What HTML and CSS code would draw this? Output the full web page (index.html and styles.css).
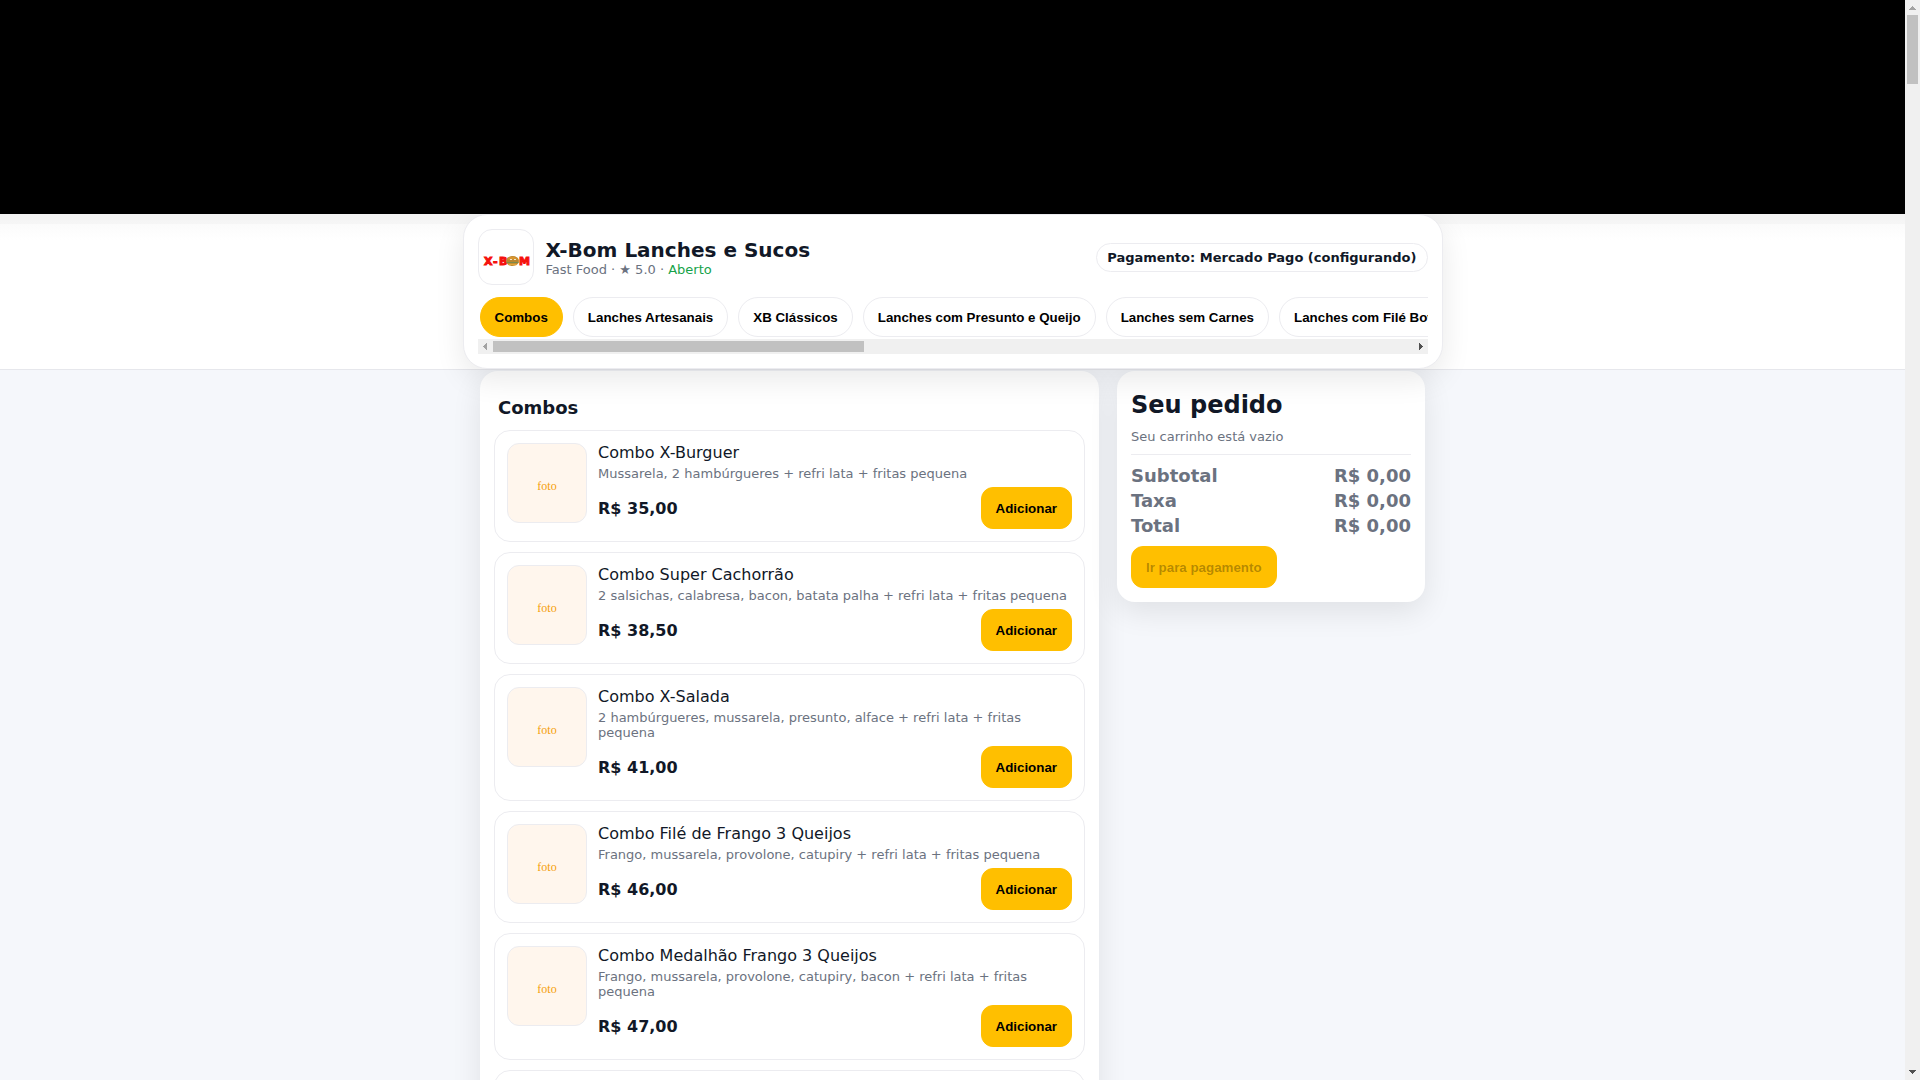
FILE: index.html
```html
<!DOCTYPE html>
<html lang="pt-BR">
<head>
    <meta charset="UTF-8">
    <meta name="viewport" content="width=device-width, initial-scale=1.0">
    <title>X-Bom Lanches e Sucos</title>
    <link rel="stylesheet" href="styles.css">
</head>
<body>
    <div class="page">
        <div class="hero"></div>

        <header class="topbar">
            <div class="store-card">
                <div class="store-row">
                    <div class="logo">
                        <svg viewBox="0 0 54 54" role="img" aria-label="X-Bom">
                            <text class="logo-text" y="35"><tspan x="5">X</tspan><tspan x="14">-</tspan><tspan x="20">B</tspan><tspan x="40">M</tspan></text>
                            <ellipse cx="33.5" cy="31" rx="6.5" ry="5" fill="#b8862f"/>
                            <path d="M28 29.500q5.500-6 11 0z" fill="#d9952f"/>
                            <path d="M27.500 32.500h12" stroke="#7d8a4c" stroke-width="1"/>
                            <path d="M31 29.500h2M35 29.500h2" stroke="#f4e6c8" stroke-width="1"/>
                            <path d="M29.500 34.500h8" stroke="#e3a63a" stroke-width="1.500"/>
                        </svg>
                    </div>
                    <div class="store-info">
                        <h1>X-Bom Lanches e Sucos</h1>
                        <div class="store-meta">Fast Food · ★ 5.0 · <span class="open">Aberto</span></div>
                    </div>
                    <span class="pill">Pagamento: Mercado Pago (configurando)</span>
                </div>
                <nav class="tabs">
                    <button class="tab active" type="button">Combos</button>
                    <button class="tab" type="button">Lanches Artesanais</button>
                    <button class="tab" type="button">XB Clássicos</button>
                    <button class="tab" type="button">Lanches com Presunto e Queijo</button>
                    <button class="tab" type="button">Lanches sem Carnes</button>
                    <button class="tab" type="button">Lanches com Filé Bovino</button>
                </nav>
                <div class="scrollbar scrollbar-x" aria-hidden="true">
                    <svg class="arrow off" viewBox="0 0 15 15"><path d="M9 4v7L5 7.500z"/></svg>
                    <div class="track"><div class="thumb-bar"></div></div>
                    <svg class="arrow" viewBox="0 0 15 15"><path d="M6 4v7l4-3.500z"/></svg>
                </div>
            </div>
        </header>

        <main class="layout">
            <section class="menu panel">
                <h2 class="section-title">Combos</h2>
                <div class="items">
                    <article class="item">
                        <div class="thumb">foto</div>
                        <div class="item-body">
                            <h3>Combo X-Burguer</h3>
                            <p>Mussarela, 2 hambúrgueres + refri lata + fritas pequena</p>
                            <div class="item-foot"><strong>R$ 35,00</strong><button class="btn" type="button">Adicionar</button></div>
                        </div>
                    </article>
                    <article class="item">
                        <div class="thumb">foto</div>
                        <div class="item-body">
                            <h3>Combo Super Cachorrão</h3>
                            <p>2 salsichas, calabresa, bacon, batata palha + refri lata + fritas pequena</p>
                            <div class="item-foot"><strong>R$ 38,50</strong><button class="btn" type="button">Adicionar</button></div>
                        </div>
                    </article>
                    <article class="item">
                        <div class="thumb">foto</div>
                        <div class="item-body">
                            <h3>Combo X-Salada</h3>
                            <p>2 hambúrgueres, mussarela, presunto, alface + refri lata + fritas pequena</p>
                            <div class="item-foot"><strong>R$ 41,00</strong><button class="btn" type="button">Adicionar</button></div>
                        </div>
                    </article>
                    <article class="item">
                        <div class="thumb">foto</div>
                        <div class="item-body">
                            <h3>Combo Filé de Frango 3 Queijos</h3>
                            <p>Frango, mussarela, provolone, catupiry + refri lata + fritas pequena</p>
                            <div class="item-foot"><strong>R$ 46,00</strong><button class="btn" type="button">Adicionar</button></div>
                        </div>
                    </article>
                    <article class="item">
                        <div class="thumb">foto</div>
                        <div class="item-body">
                            <h3>Combo Medalhão Frango 3 Queijos</h3>
                            <p>Frango, mussarela, provolone, catupiry, bacon + refri lata + fritas pequena</p>
                            <div class="item-foot"><strong>R$ 47,00</strong><button class="btn" type="button">Adicionar</button></div>
                        </div>
                    </article>
                    <article class="item">
                        <div class="thumb"></div>
                    </article>
                </div>
            </section>

            <aside class="cart panel">
                <h2>Seu pedido</h2>
                <p class="empty">Seu carrinho está vazio</p>
                <dl class="totals">
                    <div><dt>Subtotal</dt><dd>R$ 0,00</dd></div>
                    <div><dt>Taxa</dt><dd>R$ 0,00</dd></div>
                    <div><dt>Total</dt><dd>R$ 0,00</dd></div>
                </dl>
                <button class="btn" type="button" disabled>Ir para pagamento</button>
            </aside>
        </main>
    </div>

    <div class="scrollbar scrollbar-y" aria-hidden="true">
        <svg class="arrow off" viewBox="0 0 15 15"><path d="M4 10h7L7.500 6z"/></svg>
        <div class="track"><div class="thumb-bar"></div></div>
        <svg class="arrow" viewBox="0 0 15 15"><path d="M4 5h7L7.500 9z"/></svg>
    </div>
</body>
</html>
```

FILE: styles.css
```css
:root {
    --brand: #ffbf00;
    --ink: #111827;
    --muted: #6b7280;
    --line: #ececf0;
    --shadow: 0 10px 30px rgba(0, 0, 0, 0.09);
}
* { box-sizing: border-box; }
body {
    display: flex;
    height: 100vh;
    margin: 0;
    overflow: hidden;
    background: #f5f7fb;
    color: var(--ink);
    font-family: "DejaVu Sans", sans-serif;
    font-size: 16px;
}
h1, h2, h3, p, dl, dd { margin: 0; }
button {
    font: bold 13.333px/15px "Liberation Sans", Arial, sans-serif;
    color: #000;
    cursor: pointer;
}
.page {
    flex: 1;
    min-width: 0;
    overflow: hidden;
}

.hero {
    height: 214px;
    background: #000;
}

/* --- Store header --- */
.topbar {
    position: sticky;
    top: 0;
    z-index: 2;
    background: linear-gradient(#f3f3f3, #f6f6f6 10px, #fbfbfb 10px, #fff 26px);
    border-bottom: 1px solid #e6e7ec;
}
.store-card {
    max-width: 980px;
    margin: 0 auto;
    padding: 14px;
    background: #fff;
    border: 1px solid var(--line);
    border-radius: 24px;
    box-shadow: var(--shadow);
}
.store-row {
    display: flex;
    align-items: center;
    gap: 12px;
    margin-bottom: 10px;
}
.logo {
    width: 56px;
    height: 56px;
    border: 1px solid var(--line);
    border-radius: 14px;
    overflow: hidden;
}
.logo svg { display: block; }
.logo-text {
    font: bold 11px "DejaVu Sans", sans-serif;
    fill: #f5100c;
    stroke: #f5100c;
    stroke-width: 1px;
}
.store-info { flex: 1; }
.store-info h1 {
    font-size: 20px;
    line-height: 24px;
}
.store-meta {
    font-size: 13px;
    line-height: 15px;
    color: var(--muted);
}
.open { color: #16a34a; }
.pill {
    padding: 6px 10px;
    border: 1px solid var(--line);
    border-radius: 999px;
    font-size: 13px;
    line-height: 15px;
    font-weight: 700;
}
.tabs {
    display: flex;
    gap: 10px;
    padding: 2px;
    overflow-x: auto;
}
.tab {
    flex: none;
    padding: 12px 14px 11px;
    background: #fff;
    border: 1px solid var(--line);
    border-radius: 999px;
}
.tab.active {
    background: var(--brand);
    border-color: var(--brand);
}

/* --- Scrollbars --- */
.scrollbar {
    display: flex;
    background: #f0f0f0;
}
.scrollbar-x { height: 15px; }
.scrollbar-y {
    flex: none;
    flex-direction: column;
    width: 15px;
}
.track { flex: 1; }
.thumb-bar { background: #c1c1c1; }
.scrollbar-x .track { padding: 2px 0; }
.scrollbar-y .track { padding: 0 2px; }
.scrollbar-x .thumb-bar {
    width: 40.4%;
    height: 11px;
}
.scrollbar-y .thumb-bar { height: 69px; }
.arrow {
    flex: none;
    width: 15px;
    height: 15px;
    fill: #505050;
    shape-rendering: crispEdges;
}
.arrow.off { fill: #a3a3a3; }

/* --- Menu and cart --- */
.layout {
    display: grid;
    grid-template-columns: 1fr 308px;
    align-items: start;
    gap: 18px;
    max-width: 945px;
    margin: 0 auto;
    padding-top: 1px;
}
.panel {
    padding: 14px;
    background: #fff;
    border-radius: 18px;
    box-shadow: var(--shadow);
}
.section-title {
    padding: 12px 4px 11px;
    font-size: 18px;
    line-height: 22px;
}
.items {
    display: grid;
    gap: 10px;
}
.item {
    display: flex;
    align-items: flex-start;
    gap: 11px;
    padding: 12px;
    border: 1px solid var(--line);
    border-radius: 16px;
}
.thumb {
    flex: none;
    display: grid;
    place-items: center;
    width: 80px;
    height: 80px;
    padding-top: 6px;
    background: #fff6ed;
    border: 1px solid var(--line);
    border-radius: 12px;
    color: #f59e0b;
    font: 12px "Liberation Serif", serif;
}
.item-body { flex: 1; }
.item h3 {
    font-size: 16px;
    line-height: 19px;
    font-weight: 400;
}
.item p {
    margin: 4px 0 6px;
    font-size: 13px;
    line-height: 15px;
    color: var(--muted);
}
.item-foot {
    display: flex;
    align-items: center;
    justify-content: space-between;
}
.btn {
    padding: 13px 14px 12px;
    background: var(--brand);
    border: 1px solid var(--brand);
    border-radius: 12px;
}
.btn:disabled {
    color: rgba(0, 0, 0, 0.3);
    cursor: default;
}
.cart h2 {
    padding: 6px 0 2px;
    font-size: 24px;
    line-height: 28px;
}
.empty {
    padding: 8px 0 10px;
    font-size: 13px;
    line-height: 15px;
    color: var(--muted);
    border-bottom: 1px solid var(--line);
}
.totals {
    padding: 8px 0;
    font-size: 18px;
    line-height: 25px;
    font-weight: 700;
    color: var(--muted);
}
.totals div {
    display: flex;
    justify-content: space-between;
}
```
